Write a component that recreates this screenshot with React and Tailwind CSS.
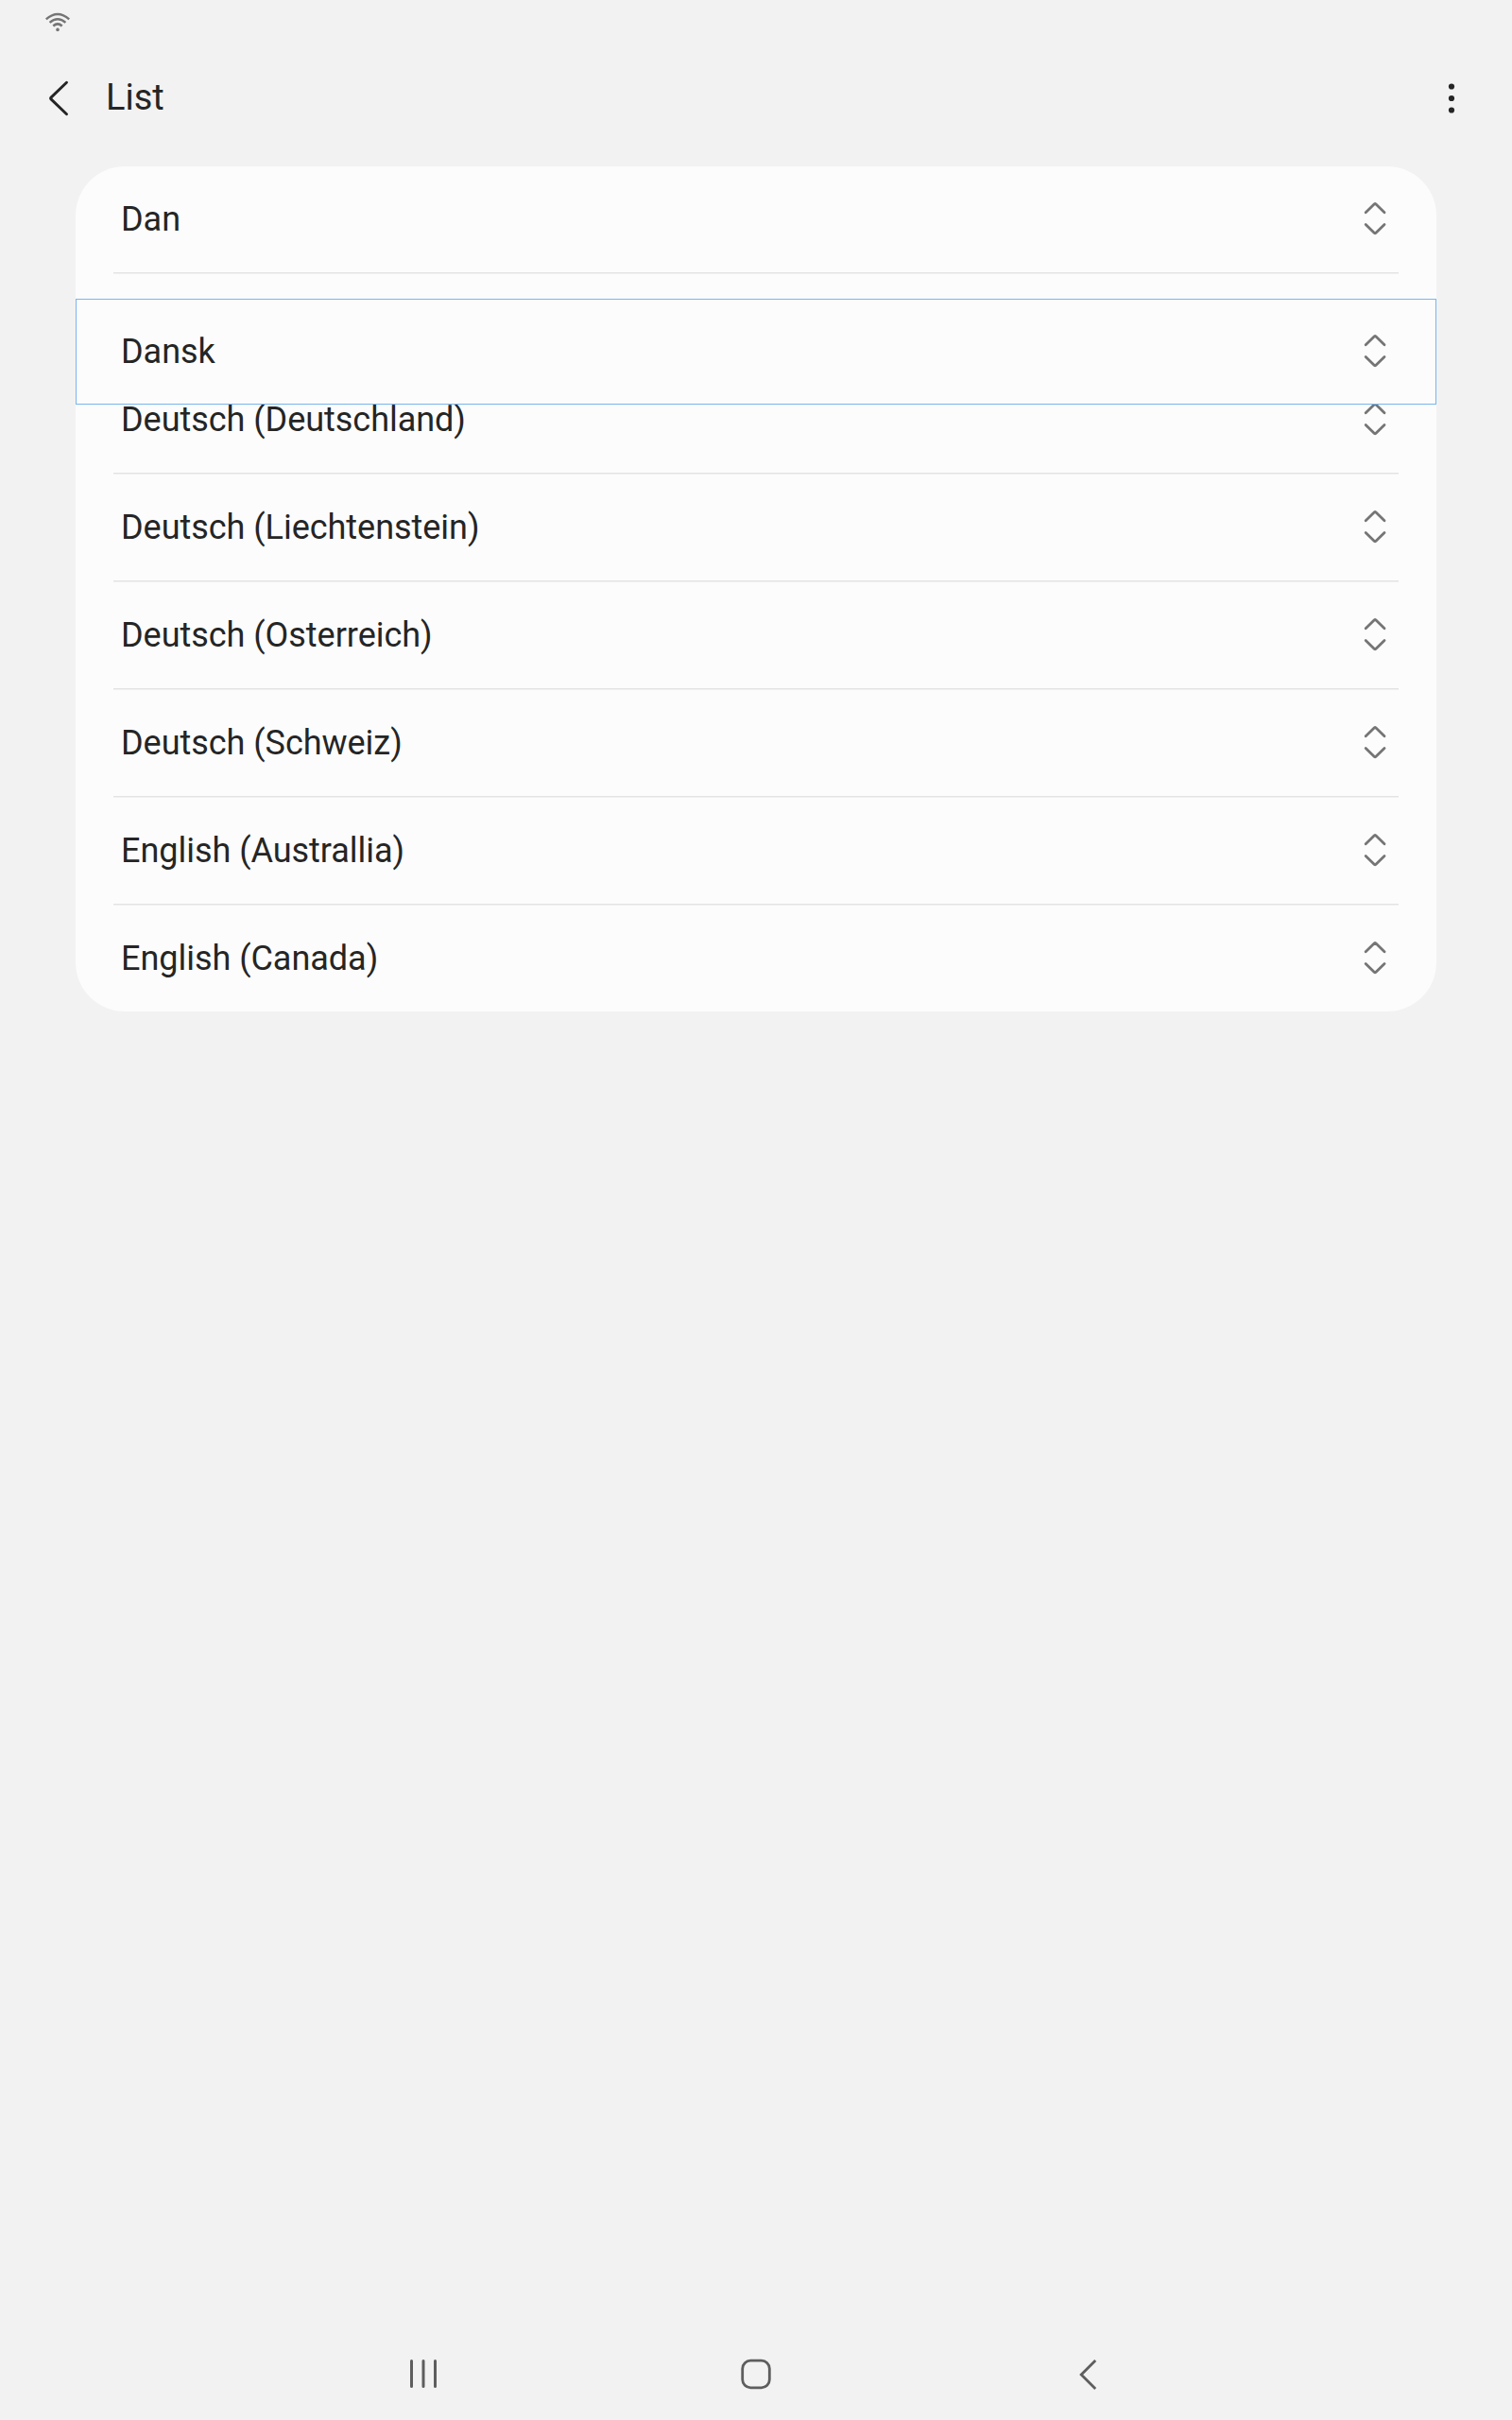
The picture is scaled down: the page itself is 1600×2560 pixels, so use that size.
const languages = [
  "Deutsch (Deutschland)",
  "Deutsch (Liechtenstein)",
  "Deutsch (Osterreich)",
  "Deutsch (Schweiz)",
  "English (Australlia)",
  "English (Canada)",
];

function ReorderIcon() {
  return (
    <svg className="mb-0.5 h-9 w-6" viewBox="0 0 24 36" fill="none" stroke="#757575" strokeWidth="2.8" strokeLinecap="round" strokeLinejoin="round">
      <path d="M2.2 11.8 11.4 2.8Q12.1 2.2 12.8 2.8L22 11.8M2.2 24.4 11.4 33.4Q12.1 34 12.8 33.4L22 24.4" />
    </svg>
  );
}

function RowContent({ label }) {
  return (
    <div className="flex h-28 w-full items-center justify-between pr-[53px] pl-12">
      <span className="text-[36px] leading-[42px] tracking-[-0.03px]">{label}</span>
      <ReorderIcon />
    </div>
  );
}

function Divider() {
  return (
    <div className="mx-10 h-0.5 border-t border-[#e3e3e3] bg-[#f0f0f0]" />
  );
}

export default function App() {
  return (
    <div className="flex h-[2560px] w-[1600px] flex-col overflow-hidden bg-[#f2f2f2] font-[Roboto,sans-serif] text-[#252525]">
      <div className="h-12 pt-3 pl-12">
        <svg className="h-6 w-[26px]" viewBox="0 0 26 24" fill="none" stroke="#757575" strokeWidth="2.5" strokeLinecap="butt">
          <path d="M.8 8.4Q13-2.4 25.2 8.4M4.6 11.9Q13 4.5 21.4 11.9M8.3 15.5Q13 11.3 17.7 15.5" />
          <circle cx="13" cy="19.4" r="1.8" fill="#757575" stroke="none" />
        </svg>
      </div>

      <header className="flex h-28 items-center justify-between pr-[52px] pl-12">
        <div className="flex items-center">
          <svg className="h-10 w-7" viewBox="0 0 28 40" fill="none" stroke="#252525" strokeWidth="2.9" strokeLinecap="round" strokeLinejoin="round">
            <path d="M22.5 3.3 6 19.1Q5.1 20 6 20.9L22.5 36.7" />
          </svg>
          <h1 className="mb-0.5 ml-9 text-[38px] leading-[44px]">List</h1>
        </div>
        <svg className="h-9 w-6" viewBox="0 0 24 36" fill="#252525">
          <circle cx="12" cy="5.5" r="3.1" />
          <circle cx="12" cy="18" r="3.1" />
          <circle cx="12" cy="30.5" r="3.1" />
        </svg>
      </header>

      <main className="mx-20 mt-4 h-[894px] rounded-[52px] bg-[#fcfcfc]">
        <RowContent label="Dan" />
        <Divider />
        <div className="relative h-[98px]">
          <div className="absolute inset-x-0 top-[26px] z-10 h-28 bg-[#fcfcfc]">
            <RowContent label="Dansk" />
            <div className="pointer-events-none absolute inset-0 border border-[#79b5ef]" />
          </div>
        </div>
        {languages.map((label, i) => (
          <div key={label}>
            <RowContent label={label} />
            {i < languages.length - 1 && <Divider />}
          </div>
        ))}
      </main>

      <nav className="mt-auto flex h-24 items-center justify-center gap-[312px]">
        <svg className="h-10 w-10" viewBox="0 0 40 40" fill="none" stroke="#5e5e5e" strokeWidth="3" strokeLinecap="round">
          <path d="M7.5 5.5V32.5M20 5.5V32.5M32.5 5.5V32.5" />
        </svg>
        <svg className="h-10 w-10" viewBox="0 0 40 40" fill="none" stroke="#5e5e5e" strokeWidth="2.8">
          <rect x="5.7" y="5.2" width="28.6" height="28.6" rx="8.5" />
        </svg>
        <svg className="h-10 w-10" viewBox="0 0 40 40" fill="none" stroke="#5e5e5e" strokeWidth="2.8" strokeLinejoin="miter">
          <path d="M27.2 5 12.2 20 27.2 35" />
        </svg>
      </nav>
    </div>
  );
}
